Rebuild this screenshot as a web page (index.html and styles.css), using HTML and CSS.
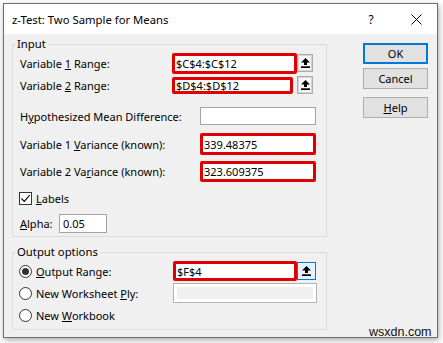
FILE: index.html
```html
<!DOCTYPE html>
<html>
<head>
<meta charset="utf-8">
<link rel="stylesheet" href="styles.css">
</head>
<body>
<div class="dialog">
  <div class="titlebar">
    <div class="title">z-Test: Two Sample for Means</div>
    <div class="cap-help">?</div>
    <div class="cap-close"><svg width="11" height="11" viewBox="0 0 11 11"><path d="M0.5 0.5 L10.5 10.5 M10.5 0.5 L0.5 10.5" stroke="#000" stroke-width="1" fill="none"/></svg></div>
  </div>
  <div class="main">
    <div class="left">
      <fieldset class="group group-input">
        <legend>Input</legend>
        <div class="row r1">
          <span class="lbl lbl-range">Variable <u>1</u> Range:</span>
          <span class="red box-r1">$C$4:$C$12</span>
          <span class="pick"><svg width="9" height="10" viewBox="0 0 9 10"><path d="M4.5 0 L9 4.5 L6 4.5 L6 7 L3 7 L3 4.5 L0 4.5 Z" fill="#000"/><rect x="0" y="8.3" width="9" height="1.7" fill="#000"/></svg></span>
        </div>
        <div class="row r2">
          <span class="lbl lbl-range">Variable <u>2</u> Range:</span>
          <span class="red box-r2">$D$4:$D$12</span>
          <span class="pick pick-r2"><svg width="9" height="10" viewBox="0 0 9 10"><path d="M4.5 0 L9 4.5 L6 4.5 L6 7 L3 7 L3 4.5 L0 4.5 Z" fill="#000"/><rect x="0" y="8.3" width="9" height="1.7" fill="#000"/></svg></span>
        </div>
        <div class="row r3">
          <span class="lbl lbl-wide">H<u>y</u>pothesized Mean Difference:</span>
          <span class="tb box-hyp"></span>
        </div>
        <div class="row r4">
          <span class="lbl lbl-wide">Variable 1 <u>V</u>ariance (known):</span>
          <span class="red box-var">339.48375</span>
        </div>
        <div class="row r5">
          <span class="lbl lbl-wide">Variable 2 Va<u>r</u>iance (known):</span>
          <span class="red box-var box-var2">323.609375</span>
        </div>
        <div class="row r6">
          <span class="check"><svg width="11" height="11" viewBox="0 0 11 11"><path d="M1.5 5.5 L4.3 8.4 L9.8 2" stroke="#000" stroke-width="1.1" fill="none"/></svg></span>
          <span class="check-lbl"><u>L</u>abels</span>
        </div>
        <div class="row r7">
          <span class="lbl lbl-alpha"><u>A</u>lpha:</span>
          <span class="tb box-alpha">0.05</span>
        </div>
      </fieldset>
      <fieldset class="group group-output">
        <legend>Output options</legend>
        <div class="row o1">
          <span class="opt"><span class="radio on"></span><span><u>O</u>utput Range:</span></span>
          <span class="red box-out">$F$4</span>
          <span class="pick pick-focus"><svg width="9" height="10" viewBox="0 0 9 10"><path d="M4.5 0 L9 4.5 L6 4.5 L6 7 L3 7 L3 4.5 L0 4.5 Z" fill="#000"/><rect x="0" y="8.3" width="9" height="1.7" fill="#000"/></svg></span>
        </div>
        <div class="row o2">
          <span class="opt"><span class="radio"></span><span>New Worksheet <u>P</u>ly:</span></span>
          <span class="disabled-tb"></span>
        </div>
        <div class="row o3">
          <span class="opt"><span class="radio"></span><span>New <u>W</u>orkbook</span></span>
        </div>
      </fieldset>
    </div>
    <div class="right">
      <div class="btn ok">OK</div>
      <div class="btn cancel">Cancel</div>
      <div class="btn help"><span><u>H</u>elp</span></div>
    </div>
  </div>
</div>
<div class="watermark">wsxdn.com</div>
</body>
</html>
```
FILE: styles.css
```css
html, body {
  margin: 0;
  padding: 0;
  background: #ffffff;
}
body {
  font-family: "Noto Sans", "DejaVu Sans", sans-serif;
  font-size: 11px;
  color: #000;
  position: relative;
  width: 443px;
  height: 343px;
  overflow: hidden;
}
.dialog {
  margin: 3px 0 0 3px;
  width: 435px;
  height: 335px;
  box-sizing: border-box;
  border: 1px solid #6e6e6e;
  background: #f0f0f0;
  box-shadow: 1px 2px 6px rgba(0, 0, 0, 0.35);
  display: flex;
  flex-direction: column;
}
.titlebar {
  height: 30px;
  flex: none;
  background: #fff;
  display: flex;
  align-items: center;
  padding-left: 8px;
}
.title {
  flex: 1;
  font-size: 11.3px;
}
.cap-help {
  width: 50px;
  text-align: center;
  font-size: 12px;
}
.cap-close {
  width: 41px;
  display: flex;
  justify-content: center;
  align-items: center;
}
.main {
  display: flex;
  padding: 2px 9px 0 8px;
  gap: 36px;
}
.left {
  width: 315px;
  display: flex;
  flex-direction: column;
  gap: 7px;
}
.group {
  margin: 0;
  min-width: 0;
  border: 1px solid #dcdcdc;
  padding: 1px 0 3px 7px;
}
.group legend {
  margin-left: -4px;
  padding: 0 2px 0 1px;
  line-height: 16px;
  font-size: 11.3px;
}
.group-output {
  padding-bottom: 4px;
}
.row {
  display: flex;
  align-items: center;
}
.r1 { height: 20px; }
.r2 { height: 18px; margin-top: 3px; }
.r3 { height: 18px; margin-top: 13px; }
.r4 { height: 22px; margin-top: 8px; }
.r5 { height: 21px; margin-top: 6px; }
.r6 { height: 13px; margin-top: 10px; }
.r7 { height: 19px; margin-top: 9px; }
.o1 { height: 20px; }
.o2 { height: 20px; margin-top: 2px; }
.o3 { height: 20px; margin-top: 2px; }
.lbl {
  flex: none;
  white-space: nowrap;
}
.lbl-range { width: 152px; }
.lbl-wide { width: 180px; }
.lbl-alpha { width: 39px; }
.red {
  box-sizing: border-box;
  border: 3px solid #e00000;
  border-radius: 2px;
  background: #fff;
  padding-left: 1px;
  display: flex;
  align-items: center;
  white-space: nowrap;
}
.tb {
  box-sizing: border-box;
  border: 1px solid #a3a3a3;
  background: #fff;
  display: flex;
  align-items: center;
  padding-left: 3px;
}
.box-r1 { width: 125px; height: 21px; }
.box-r2 { width: 121px; height: 17px; }
.box-hyp { width: 116px; height: 18px; }
.box-var { width: 116px; height: 22px; }
.box-var2 { height: 21px; }
.box-alpha { width: 48px; height: 19px; }
.box-out { width: 124px; height: 20px; }
.pick {
  box-sizing: border-box;
  width: 16px;
  height: 18px;
  border: 1px solid #adadad;
  box-shadow: inset 0 0 0 1px #d4d4d4;
  background: #f7f7f7;
  display: flex;
  align-items: center;
  justify-content: center;
}
.pick-r2 { margin-left: 4px; }
.pick-focus {
  width: 19px;
  border-color: #0078d7;
  box-shadow: none;
  background: #e5f1fb;
}
.check {
  box-sizing: border-box;
  width: 13px;
  height: 13px;
  margin-left: -1px;
  border: 1px solid #333;
  background: #fff;
  display: flex;
  align-items: center;
  justify-content: center;
}
.check-lbl {
  margin-left: 4px;
}
.opt {
  width: 154px;
  margin-left: -1px;
  display: flex;
  align-items: center;
  gap: 4px;
  flex: none;
  white-space: nowrap;
}
.radio {
  box-sizing: border-box;
  width: 13px;
  height: 13px;
  border: 1px solid #333;
  border-radius: 50%;
  background: #fff;
  display: flex;
  align-items: center;
  justify-content: center;
  flex: none;
}
.radio.on::after {
  content: "";
  width: 7px;
  height: 7px;
  border-radius: 50%;
  background: #333;
}
.disabled-tb {
  box-sizing: border-box;
  width: 144px;
  height: 20px;
  border: 1px solid #b4b4b4;
  background: #f0f0f0;
  box-shadow: inset 0 0 0 3px #fff;
}
.right {
  width: 65px;
  display: flex;
  flex-direction: column;
  padding-top: 7px;
}
.btn {
  box-sizing: border-box;
  width: 65px;
  height: 21px;
  border: 1px solid #adadad;
  background: #e1e1e1;
  display: flex;
  align-items: center;
  justify-content: center;
}
.btn.ok {
  border-color: #0078d7;
  box-shadow: inset 0 0 0 1px #0078d7;
}
.btn.cancel { margin-top: 4px; }
.btn.help { margin-top: 8px; }
.watermark {
  position: absolute;
  left: 369px;
  top: 325px;
  font-family: "Liberation Sans", Arial, sans-serif;
  font-size: 12.5px;
  color: #111;
}
```
